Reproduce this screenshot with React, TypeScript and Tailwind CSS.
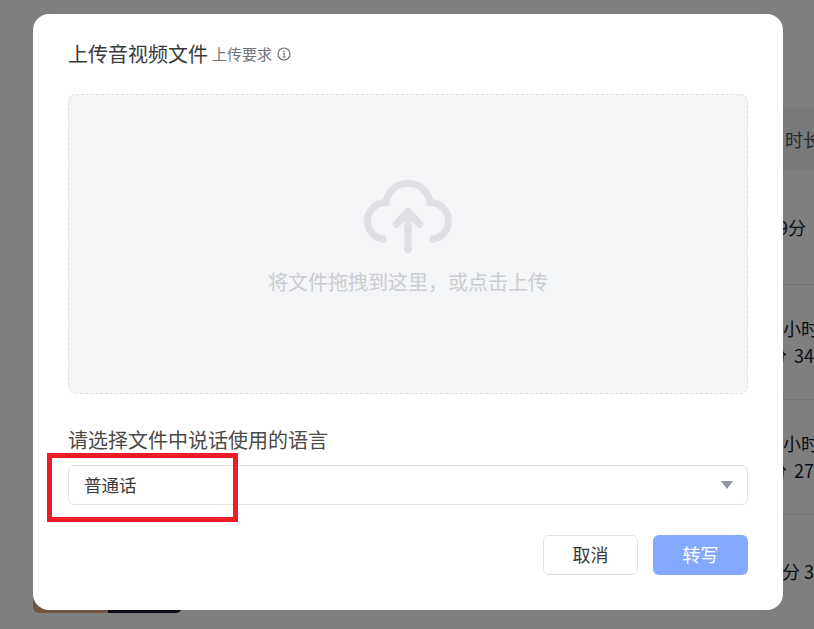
export default function App() {
  return (
    <div className="relative h-[629px] w-[814px] overflow-hidden bg-white font-['Noto_Sans_CJK_SC','Noto_Sans',sans-serif] text-[18px] leading-[27px] text-gray-900">
      {/* page behind the dialog */}
      <div className="flex flex-col pt-[108px] pl-[33px]">
        <div className="flex h-[62px] items-center justify-end bg-[#f3f4f6] text-gray-600">
          <span className="w-[29px] whitespace-nowrap">时长</span>
        </div>
        <div className="flex h-[115px] items-center justify-end border-b border-gray-200">
          <span className="w-[36px] whitespace-nowrap">9分</span>
        </div>
        <div className="flex h-[115px] flex-col items-end justify-center border-b border-gray-200">
          <span className="w-[31px] whitespace-nowrap">小时</span>
          <span className="w-[45px] whitespace-nowrap [word-spacing:3px]">分 34</span>
        </div>
        <div className="flex h-[115px] flex-col items-end justify-center border-b border-gray-200">
          <span className="w-[31px] whitespace-nowrap">小时</span>
          <span className="w-[45px] whitespace-nowrap [word-spacing:3px]">分 27</span>
        </div>
        <div className="flex h-[98px] items-end justify-between">
          <div className="flex h-[40px] w-[149px] overflow-hidden rounded-b-md">
            <div className="w-[75px] bg-[#e6aa8c]" />
            <div className="flex-1 bg-[#1a1a2a]" />
          </div>
          <span className="w-[32px] self-center whitespace-nowrap pt-[14px]">分 3</span>
        </div>
      </div>

      {/* overlay */}
      <div className="absolute inset-0 bg-black/50" />

      {/* dialog */}
      <div className="absolute left-[33px] top-[14px] flex h-[596px] w-[750px] flex-col rounded-[16px] bg-white px-[35px] pt-[25px]">
        <div className="flex h-[30px] items-center">
          <span className="text-[20px] leading-[30px] text-[#3a3a3a]">上传音视频文件</span>
          <span className="ml-[4px] text-[15px] leading-[30px] text-[#70747a]">上传要求</span>
          <svg className="ml-[5px]" width="14" height="14" viewBox="0 0 14 14" fill="none" stroke="#666a70" strokeWidth="1.1">
            <circle cx="7" cy="7" r="6" />
            <path d="M5.8 6.2H7.2V10M5.6 10H8.6" />
            <circle cx="7" cy="4.2" r="0.7" fill="#666a70" stroke="none" />
          </svg>
        </div>

        <div className="mt-[25px] flex h-[300px] flex-col items-center rounded-[8px] border border-dashed border-[#dcdfe4] bg-[#f4f5f7] pt-[85px]">
          <svg width="90" height="76" viewBox="0 0 90 76" fill="none" stroke="#dfe0e3">
            <path d="M23 59.5A18.5 18.5 0 0 1 23 22.5A22.2 22.2 0 0 1 67 22.5A18.5 18.5 0 0 1 67 59.5" strokeWidth="7" />
            <path d="M45 69.5V32M33.5 44L45 32L56.5 44" strokeWidth="7.5" strokeLinecap="round" strokeLinejoin="round" />
          </svg>
          <div className="mt-[11px] text-[20px] leading-[30px] text-[#cbcdd1]">将文件拖拽到这里，或点击上传</div>
        </div>

        <div className="mt-[31px] text-[20px] leading-[30px] text-[#4a4a4a]">请选择文件中说话使用的语言</div>

        <div className="mt-[10px] flex h-[40px] items-center justify-between rounded-[6px] border border-[#e2e3e6] pl-[15px] pr-[14px]">
          <span className="pb-[1px] text-[17.5px] text-[#3a3a3a]">普通话</span>
          <div className="h-0 w-0 border-x-[6.5px] border-t-[8px] border-x-transparent border-t-[#8f959e]" />
        </div>

        <div className="mt-[30px] flex justify-end gap-[15px]">
          <button className="h-[40px] w-[95px] rounded-[6px] border border-[#e2e3e6] bg-white pb-[1px] text-[18px] text-[#3a3a3a]">取消</button>
          <button className="h-[40px] w-[95px] rounded-[6px] bg-[#85a8ff] pb-[1px] text-[18px] text-white">转写</button>
        </div>
      </div>

      {/* red annotation */}
      <div className="absolute left-[47px] top-[453px] h-[69px] w-[191px] border-[5px] border-[#ee1c25]" />
    </div>
  );
}
